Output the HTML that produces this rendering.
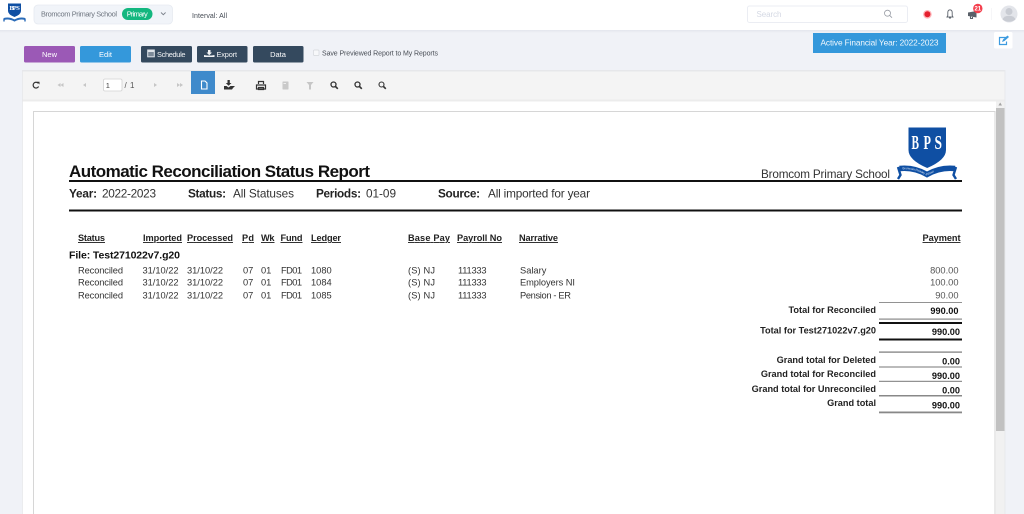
<!DOCTYPE html>
<html><head><meta charset="utf-8"><style>
html,body{margin:0;padding:0;width:1024px;height:514px;overflow:hidden;background:#f0f2f7}
svg{display:block;font-family:"Liberation Sans",sans-serif}
.b{font-weight:bold}
.h{font-weight:bold;font-size:9.200px;fill:#222;text-decoration:underline}
.r{font-size:9.300px;fill:#333}
.t{font-weight:bold;font-size:9.180px;fill:#222;text-anchor:end}
.a{font-weight:bold;font-size:9.200px;fill:#111;text-anchor:end}
.m{font-size:9.300px;fill:#555;text-anchor:end}
.w{fill:#fff;font-size:7.500px;text-anchor:middle}
</style></head><body>
<svg width="1024" height="514" viewBox="0 0 1024 514" xmlns="http://www.w3.org/2000/svg">
<defs>
<linearGradient id="sh" x1="0" y1="0" x2="0" y2="1"><stop offset="0" stop-color="#dfe2ea"/><stop offset="1" stop-color="#f0f2f7"/></linearGradient>
<path id="rib" d="M899.500 168.500Q914 167 927 174.500Q940 167 955 168.500"/>
</defs>
<rect width="1024" height="514" fill="#f0f2f7"/>
<!-- header -->
<rect y="29" width="1024" height="4" fill="url(#sh)"/>
<rect width="1024" height="30" fill="#fff"/>
<!-- small logo -->
<path d="M8 3.500H21V11Q21 14.500 14.500 17Q8 14.500 8 11Z" fill="#0f4fa3"/>
<text x="9.500" y="10" font-size="6.500" font-family="Liberation Serif" class="b" fill="#fff">B</text>
<text x="12.800" y="10" font-size="6.500" font-family="Liberation Serif" class="b" fill="#fff">P</text>
<text x="16.200" y="10" font-size="6.500" font-family="Liberation Serif" class="b" fill="#fff">S</text>
<path d="M4 19Q9 17.500 14.500 20.500Q20 17.500 25 19" fill="none" stroke="#2a6bb8" stroke-width="2"/>
<path d="M4 18.500V21.500M25 18.500V21.500" stroke="#2a6bb8" stroke-width="1.400"/>
<!-- selector -->
<rect x="34" y="5" width="138.500" height="19" rx="4" fill="#f1f4f9" stroke="#e6eaf1" stroke-width=".8"/>
<text x="41" y="16.500" font-size="7.400" fill="#6f7680" textLength="76">Bromcom Primary School</text>
<rect x="122" y="8" width="30.500" height="12" rx="6" fill="#13b77f"/>
<text x="137.200" y="16.600" class="w" textLength="21">Primary</text>
<path d="M161 12.500L163.300 14.700L165.600 12.500" fill="none" stroke="#7b818b" stroke-width=".9"/>
<text x="192" y="18" font-size="7" fill="#454b54" textLength="35">Interval: All</text>
<!-- search -->
<rect x="747.500" y="6" width="160" height="16.500" rx="2" fill="#fff" stroke="#ebedf3"/>
<text x="756.500" y="17" font-size="8" fill="#d5d9e4" textLength="25">Search</text>
<circle cx="887.500" cy="13.200" r="3" fill="none" stroke="#9a9ea6" stroke-width=".8"/><path d="M889.700 15.400L892 17.700" stroke="#9a9ea6" stroke-width=".9"/>
<!-- status icons -->
<circle cx="927.400" cy="14.300" r="4.300" fill="#ffb3b8"/><circle cx="927.400" cy="14.300" r="3" fill="#e5202e"/>
<path d="M947 17L947.800 15.500V12.500Q947.800 10 950 9.800Q952.200 10 952.200 12.500V15.500L953 17ZM949 18H951" fill="none" stroke="#5e646d" stroke-width=".9"/>
<path d="M968 12.500L976.500 11V17.500L968 16Z" fill="#596069"/><path d="M970.500 16.500V18.500H972.500V17" fill="none" stroke="#596069" stroke-width="1.100"/>
<circle cx="977.800" cy="8.500" r="4.700" fill="#f4414f"/>
<text x="977.800" y="10.700" font-size="6" class="b" fill="#fff" text-anchor="middle">21</text>
<rect x="991" y="8" width=".8" height="12" fill="#f3f4f6"/>
<circle cx="1009" cy="14" r="8.500" fill="#e3e5ea"/><circle cx="1009" cy="11.500" r="3.500" fill="#c9ccd3"/><path d="M1002.500 19.500Q1004 15.800 1009 15.800Q1014 15.800 1015.500 19.500Q1009 24 1002.500 19.500Z" fill="#c9ccd3"/>
<!-- buttons -->
<rect x="24" y="46" width="51" height="16.500" rx="1.500" fill="#9b59b6"/>
<text x="49.500" y="56.800" class="w">New</text>
<rect x="80" y="46" width="51" height="16.500" rx="1.500" fill="#3498db"/>
<text x="105.500" y="56.800" class="w">Edit</text>
<rect x="141" y="46" width="51" height="16.500" rx="1.500" fill="#34495e"/>
<rect x="147.200" y="49.500" width="7.600" height="7.800" fill="#dfe4ea"/><rect x="148.200" y="52" width="5.600" height="4.300" fill="#7c8a99"/>
<text x="157" y="56.800" font-size="7.400" fill="#f1f3f5" textLength="28.500">Schedule</text>
<rect x="197" y="46" width="50.500" height="16.500" rx="1.500" fill="#34495e"/>
<path d="M208 50H210.500V52.500H212L209.250 55.200L206.500 52.500H208ZM207 55.500H211.500L214.500 55V57H204V55Z" fill="#f1f3f5"/>
<text x="216.500" y="56.800" font-size="7.400" fill="#f1f3f5" textLength="20.500">Export</text>
<rect x="253" y="46" width="50.500" height="16.500" rx="1.500" fill="#34495e"/>
<text x="278" y="56.800" class="w">Data</text>
<rect x="313.500" y="50" width="5.500" height="5.500" rx="1" fill="#f7f8fa" stroke="#d4d7dc" stroke-width=".7"/>
<text x="322" y="55.500" font-size="7" fill="#4a4f57" textLength="116">Save Previewed Report to My Reports</text>
<!-- FY -->
<rect x="813" y="33" width="133" height="20" fill="#3498db"/>
<text x="820.500" y="45.500" font-size="8.300" fill="#f2f8fd" textLength="118">Active Financial Year: 2022-2023</text>
<rect x="994" y="32" width="18.500" height="16.500" rx="1.500" fill="#fff"/>
<path d="M1006.500 37.500H999.500V44.500H1006.500V41.500" fill="none" stroke="#3d9be0" stroke-width="1.200"/><path d="M1002 42L1003 39.500L1007.500 35.500L1009 37L1004.500 41Z" fill="#3d9be0"/>
<!-- viewer -->
<rect x="22.500" y="70" width="983" height="444" fill="#fff"/>
<rect x="22.500" y="70" width="983" height="31" fill="#f4f4f4"/>
<rect x="22.500" y="70" width="983" height="1.500" fill="#e6e7ea"/>
<rect x="22.500" y="99.500" width="983" height="2" fill="#ececec"/>
<rect x="22" y="70" width=".8" height="444" fill="#e6e7ea"/>
<rect x="1004.500" y="70" width="1" height="444" fill="#e8e9ec"/>
<!-- toolbar icons -->
<path d="M38.300 83.300A2.900 2.900 0 1 0 38.600 86.500" fill="none" stroke="#333" stroke-width="1.200"/><path d="M36.800 81.800H39.500V84.500Z" fill="#333"/>
<g fill="#c6c6c6">
<path d="M60.500 83L57.500 85L60.500 87ZM63.500 83L60.500 85L63.500 87Z"/>
<path d="M86 83L83 85L86 87Z"/>
<path d="M154 83L157 85L154 87Z"/>
<path d="M177 83L180 85L177 87ZM180 83L183 85L180 87Z"/>
</g>
<rect x="103.500" y="79" width="18.500" height="12" rx="1.500" fill="#fff" stroke="#d3d3d3" stroke-width=".8"/>
<text x="105.700" y="88" font-size="7.500" fill="#444">1</text>
<text x="124.500" y="88" font-size="8" fill="#555" textLength="10">/ 1</text>
<rect x="191" y="71" width="24" height="23" fill="#3f8acb"/>
<path d="M201.500 81H205L207 83V89H201.500Z" fill="none" stroke="#fff" stroke-width="1.100"/>
<path d="M227.500 80H229.800V83H231.500L228.600 85.800L225.800 83H227.500ZM224 86H226.500L228.500 87.500L230.500 86H235L233 88L232 89.500H224Z" fill="#333"/>
<path d="M258.500 84V81.500H263.500V84M256.500 89V85H265.500V89Z M258.500 87.500H263.500V89.500H258.500Z" fill="none" stroke="#333" stroke-width="1.200"/>
<rect x="282.500" y="81.500" width="6" height="8" rx=".5" fill="#c9c9c9"/><rect x="283.500" y="83" width="2.500" height="1" fill="#eee"/>
<path d="M306.500 82H313.500L311 85V89.500H309V85Z" fill="#c6c6c6"/>
<g fill="none" stroke="#333">
<circle cx="333.500" cy="84.500" r="2.500" stroke-width="1.300"/><path d="M335.500 86.500L337.800 88.800" stroke-width="1.600"/>
<circle cx="357.500" cy="84.500" r="2.500" stroke-width="1.300"/><path d="M359.500 86.500L361.800 88.800" stroke-width="1.600"/>
<circle cx="381.500" cy="84.500" r="2.500" stroke-width="1.100"/><path d="M383.500 86.500L385.800 88.800" stroke-width="1.600"/>
</g>
<!-- scrollbar -->
<rect x="996" y="101.500" width="8.500" height="412.500" fill="#f1f1f1"/>
<path d="M1000.200 102.500L1002 105.500H998.400Z" fill="#a3a3a3"/>
<rect x="996" y="108" width="8.500" height="323" fill="#c1c1c1"/>
<!-- report page -->
<rect x="33.500" y="111.500" width="961.500" height="410" fill="#fff" stroke="#d6d6d6"/>
<text x="69" y="177" class="b" font-size="17" fill="#111" textLength="301">Automatic Reconciliation Status Report</text>
<text x="761" y="178" font-size="11.700" fill="#333" textLength="129">Bromcom Primary School</text>
<!-- big logo -->
<path d="M908.500 127.500H946V150Q946 160 927.200 168Q908.500 160 908.500 150Z" fill="#0f4fa3"/>
<g font-size="20" font-family="Liberation Serif" class="b" fill="#fff">
<text x="911.500" y="149" textLength="7.500" lengthAdjust="spacingAndGlyphs">B</text>
<text x="923.500" y="149" textLength="7.500" lengthAdjust="spacingAndGlyphs">P</text>
<text x="934.500" y="149" textLength="7.500" lengthAdjust="spacingAndGlyphs">S</text>
</g>
<path d="M899.500 168.500Q914 167 927 174.500Q940 167 955 168.500" fill="none" stroke="#0f4fa3" stroke-width="5.500"/>
<path d="M898 167L900.500 175L898 179M956 167L953.500 175L956 179" fill="none" stroke="#0f4fa3" stroke-width="2.400"/>
<text font-size="2.900" fill="#e8f0fa" dy="1"><textPath href="#rib" startOffset="3">Bromcom Primary School</textPath></text>
<rect x="69" y="180" width="893" height="2" fill="#111"/>
<rect x="69" y="209.500" width="893" height="2" fill="#111"/>
<g font-size="11.800" fill="#222">
<text x="69" y="197.700" class="b" textLength="28">Year:</text>
<text x="102" y="197.700" fill="#333" textLength="54">2022-2023</text>
<text x="188" y="197.700" class="b" textLength="38">Status:</text>
<text x="233" y="197.700" fill="#333" textLength="61">All Statuses</text>
<text x="316" y="197.700" class="b" textLength="45">Periods:</text>
<text x="366" y="197.700" fill="#333" textLength="30">01-09</text>
<text x="438" y="197.700" class="b" textLength="42">Source:</text>
<text x="488" y="197.700" fill="#333" textLength="102">All imported for year</text>
</g>
<text class="h" x="78" y="241" textLength="27">Status</text>
<text class="h" x="143" y="241" textLength="39">Imported</text>
<text class="h" x="187" y="241" textLength="46">Processed</text>
<text class="h" x="242" y="241" textLength="12">Pd</text>
<text class="h" x="261" y="241" textLength="13.500">Wk</text>
<text class="h" x="280.500" y="241" textLength="22">Fund</text>
<text class="h" x="311" y="241" textLength="30">Ledger</text>
<text class="h" x="408" y="241" textLength="42">Base Pay</text>
<text class="h" x="457" y="241" textLength="45">Payroll No</text>
<text class="h" x="519" y="241" textLength="39">Narrative</text>
<text class="h" x="922.500" y="241" textLength="38">Payment</text>
<text x="69" y="258.700" class="b" font-size="10.500" fill="#111" textLength="111">File: Test271022v7.g20</text>
<g class="r">
<text class="r" x="78" y="273.700" textLength="45">Reconciled</text><text class="r" x="142.500" y="273.700" textLength="36">31/10/22</text><text class="r" x="187" y="273.700" textLength="36">31/10/22</text><text class="r" x="243" y="273.700">07</text><text class="r" x="261" y="273.700">01</text><text class="r" x="281" y="273.700" textLength="21">FD01</text><text class="r" x="311" y="273.700">1080</text><text class="r" x="408" y="273.700" textLength="27">(S) NJ</text><text class="r" x="458" y="273.700" textLength="28.500">111333</text><text class="r" x="520" y="273.700">Salary</text>
<text class="r" x="78" y="285.700" textLength="45">Reconciled</text><text class="r" x="142.500" y="285.700" textLength="36">31/10/22</text><text class="r" x="187" y="285.700" textLength="36">31/10/22</text><text class="r" x="243" y="285.700">07</text><text class="r" x="261" y="285.700">01</text><text class="r" x="281" y="285.700" textLength="21">FD01</text><text class="r" x="311" y="285.700">1084</text><text class="r" x="408" y="285.700" textLength="27">(S) NJ</text><text class="r" x="458" y="285.700" textLength="28.500">111333</text><text class="r" x="520" y="285.700" textLength="55">Employers NI</text>
<text class="r" x="78" y="298.500" textLength="45">Reconciled</text><text class="r" x="142.500" y="298.500" textLength="36">31/10/22</text><text class="r" x="187" y="298.500" textLength="36">31/10/22</text><text class="r" x="243" y="298.500">07</text><text class="r" x="261" y="298.500">01</text><text class="r" x="281" y="298.500" textLength="21">FD01</text><text class="r" x="311" y="298.500">1085</text><text class="r" x="408" y="298.500" textLength="27">(S) NJ</text><text class="r" x="458" y="298.500" textLength="28.500">111333</text><text class="r" x="520" y="298.500" textLength="51">Pension - ER</text>
</g>
<text class="m" x="958.500" y="273.700">800.00</text>
<text class="m" x="958.500" y="285.700">100.00</text>
<text class="m" x="958.500" y="298.500">90.00</text>
<text class="t" x="876" y="313">Total for Reconciled</text>
<text class="t" x="876" y="333.500">Total for Test271022v7.g20</text>
<text class="t" x="876" y="362.800">Grand total for Deleted</text>
<text class="t" x="876" y="377">Grand total for Reconciled</text>
<text class="t" x="876" y="391.800">Grand total for Unreconciled</text>
<text class="t" x="876" y="406">Grand total</text>
<text class="a" x="958.500" y="314">990.00</text>
<text class="a" x="960" y="335">990.00</text>
<text class="a" x="960" y="364.500">0.00</text>
<text class="a" x="960" y="379">990.00</text>
<text class="a" x="960" y="393.500">0.00</text>
<text class="a" x="960" y="408.500">990.00</text>
<g fill="#777">
<rect x="879" y="302" width="83" height=".8"/>
<rect x="879" y="318.500" width="83" height="1.200" fill="#888"/>
<rect x="879" y="322" width="83" height="2" fill="#111"/>
<rect x="879" y="338.500" width="83" height="2" fill="#111"/>
<rect x="879" y="351.500" width="83" height="1.200"/>
<rect x="879" y="366.500" width="83" height="1"/>
<rect x="879" y="380.800" width="83" height="1"/>
<rect x="879" y="395" width="83" height="1.500" fill="#888"/>
<rect x="879" y="411.500" width="83" height="1.800" fill="#888"/>
</g>
</svg>
</body></html>
